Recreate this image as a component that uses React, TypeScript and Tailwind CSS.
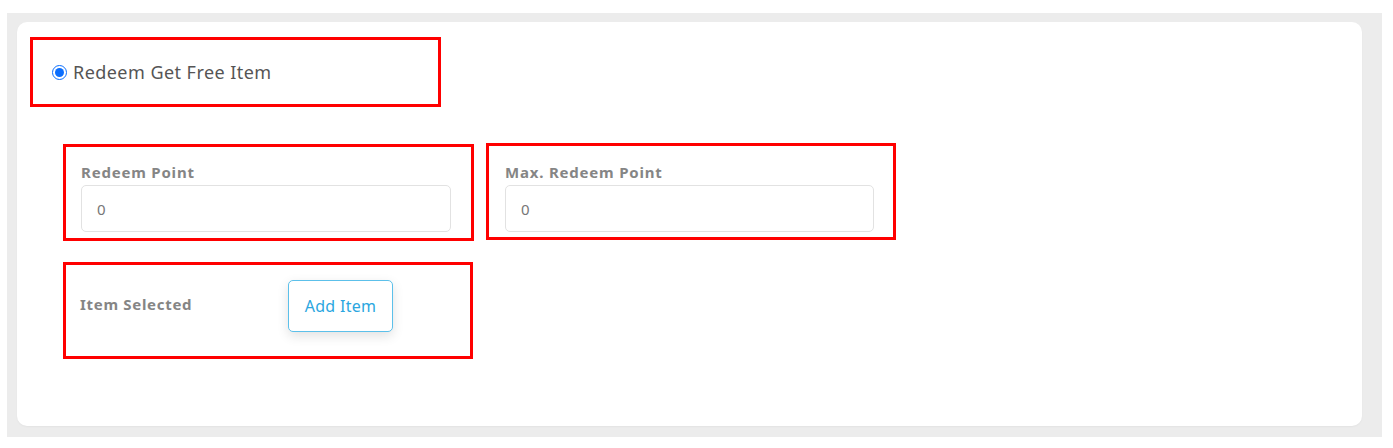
const App = () => {
  return (
    <div className="min-h-[448px] w-full bg-white pl-[7px] pt-[13px] font-['Noto_Sans','Lato',sans-serif]">
      <div className="h-[424px] w-[1375px] bg-[#ececec] pb-[11px] pl-[10px] pr-[20px] pt-[9px]">
        <div className="h-full rounded-[10px] bg-white pl-[13px] pt-[15px] shadow-[0_1px_2px_rgba(0,0,0,0.04)]">
          <div className="flex h-[70px] w-[411px] items-center border-[3px] border-[#ff0000] pl-[19px]">
            <label className="flex items-center gap-[6px] text-[18px] leading-[22px] tracking-[0.45px] text-[#555]">
              <input type="radio" defaultChecked className="h-[15px] w-[15px] accent-[#0b6efd]" />
              Redeem Get Free Item
            </label>
          </div>

          <div className="ml-[33px] mt-[37px] flex gap-[12px]">
            <div className="h-[97px] w-[411px] border-[3px] border-[#ff0000] pl-[15px] pt-[15px]">
              <div className="text-[15px] font-bold leading-[20px] tracking-[0.8px] text-[#858585]">Redeem Point</div>
              <input
                defaultValue="0"
                className="mt-[3px] h-[47px] w-[370px] rounded-[5px] border border-[#e2e2e2] px-[15px] text-[15px] text-[#777] outline-none"
              />
            </div>
            <div className="-mt-[1px] h-[97px] w-[410px] border-[3px] border-[#ff0000] pl-[16px] pt-[16px]">
              <div className="text-[15px] font-bold leading-[20px] tracking-[0.8px] text-[#858585]">Max. Redeem Point</div>
              <input
                defaultValue="0"
                className="mt-[3px] h-[47px] w-[369px] rounded-[5px] border border-[#e2e2e2] px-[15px] text-[15px] text-[#777] outline-none"
              />
            </div>
          </div>

          <div className="ml-[33px] mt-[21px] flex h-[97px] w-[410px] items-start border-[3px] border-[#ff0000] pl-[14px] pt-[15px]">
            <span className="mt-[14px] w-[208px] text-[15px] font-bold leading-[20px] tracking-[0.7px] text-[#858585]">Item Selected</span>
            <button className="h-[52px] w-[105px] rounded-[5px] border border-[#5cc0ea] bg-white text-[16px] tracking-[0.3px] text-[#2aa6e0] shadow-[0_4px_12px_rgba(0,0,0,0.12)]">
              Add Item
            </button>
          </div>
        </div>
      </div>
    </div>
  );
};

export default App;
